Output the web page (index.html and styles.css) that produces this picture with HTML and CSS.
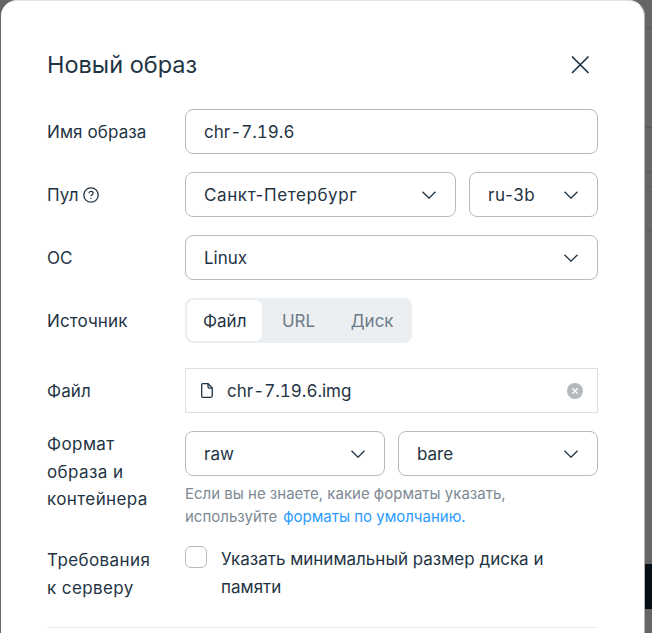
FILE: index.html
```html
<!DOCTYPE html>
<html lang="ru">
<head>
    <meta charset="UTF-8">
    <meta name="viewport" content="width=device-width, initial-scale=1.0">
    <title>Новый образ</title>
    <link rel="stylesheet" href="styles.css">
</head>
<body>

<div class="modal">
    <div class="modal-header">
        <h2>Новый образ</h2>
        <svg class="close" width="24" height="24" viewBox="0 0 24 24"><path d="M4 3.5 20.5 20M20.5 3.5 4 20"/></svg>
    </div>

    <form class="image-form">
        <div class="form-row">
            <label class="form-label">Имя образа</label>
            <div class="field wide-text">chr-7.19.6</div>
        </div>

        <div class="form-row">
            <label class="form-label">Пул
                <svg class="help" width="16" height="16" viewBox="0 0 16 16"><circle cx="8" cy="8" r="7.2"/><path d="M5.9 6.3C6 5 6.9 4.4 8 4.4c1.2 0 2.1.8 2.1 1.8 0 1.5-2.1 1.5-2.1 3.1"/><path d="M8 11v.9"/></svg>
            </label>
            <div class="field-group">
                <div class="field select grow city">Санкт-Петербург
                    <svg class="chevron" width="14" height="8" viewBox="0 0 14 8"><path d="M.5.7 7 7.2 13.5.7"/></svg>
                </div>
                <div class="field select zone city">ru-3b
                    <svg class="chevron" width="14" height="8" viewBox="0 0 14 8"><path d="M.5.7 7 7.2 13.5.7"/></svg>
                </div>
            </div>
        </div>

        <div class="form-row">
            <label class="form-label">ОС</label>
            <div class="field select">Linux
                <svg class="chevron" width="14" height="8" viewBox="0 0 14 8"><path d="M.5.7 7 7.2 13.5.7"/></svg>
            </div>
        </div>

        <div class="form-row">
            <label class="form-label">Источник</label>
            <div class="tabs">
                <span class="tab active">Файл</span>
                <span class="tab">URL</span>
                <span class="tab">Диск</span>
            </div>
        </div>

        <div class="form-row file-row">
            <label class="form-label">Файл</label>
            <div class="field file">
                <svg class="file-icon" width="12" height="15" viewBox="0 0 12 15"><path d="M1.5.7h5.6l4.2 4.4v7.7a1.5 1.5 0 0 1-1.5 1.5H1.5A1 1 0 0 1 .7 13.3V1.5a1 1 0 0 1 .8-.8z"/><path d="M7 .7v3a1.4 1.4 0 0 0 1.4 1.4h2.9"/></svg>
                <span class="file-name wide-text">chr-7.19.6.img</span>
                <svg class="clear" width="16" height="16" viewBox="0 0 16 16"><circle cx="8" cy="8" r="8"/><path d="M5.3 5.3l5.4 5.4M10.7 5.3l-5.4 5.4"/></svg>
            </div>
        </div>

        <div class="form-row">
            <label class="form-label multi">Формат образа и контейнера</label>
            <div>
                <div class="field-group half">
                    <div class="field select">raw
                        <svg class="chevron" width="14" height="8" viewBox="0 0 14 8"><path d="M.5.7 7 7.2 13.5.7"/></svg>
                    </div>
                    <div class="field select">bare
                        <svg class="chevron" width="14" height="8" viewBox="0 0 14 8"><path d="M.5.7 7 7.2 13.5.7"/></svg>
                    </div>
                </div>
                <div class="hint">
                    <span>Если вы не знаете, какие форматы указать,</span>
                    <div class="hint-line">
                        <span>используйте</span>
                        <a href="#">форматы по умолчанию.</a>
                    </div>
                </div>
            </div>
        </div>

        <div class="form-row requirements">
            <label class="form-label multi">Требования к серверу</label>
            <div class="check">
                <span class="checkbox"></span>
                <span class="check-text">Указать минимальный размер диска и памяти</span>
            </div>
        </div>
    </form>

    <hr class="divider">
</div>

</body>
</html>
```

FILE: styles.css
```css
html, body {
    height: 100%;
}
body {
    margin: 0;
    overflow: hidden;
    font-family: Inter, "Noto Sans", sans-serif;
    color: #1f3444;
    background-color: #666;
    background-image:
        linear-gradient(#060f16, #060f16),
        linear-gradient(#5a5a5a, #5a5a5a),
        linear-gradient(#5a5a5a, #5a5a5a),
        linear-gradient(#5a5a5a, #5a5a5a),
        linear-gradient(#5a5a5a, #5a5a5a),
        linear-gradient(#5a5a5a, #5a5a5a);
    background-repeat: no-repeat;
    background-size: 8px 45px, 100% 1px, 100% 1px, 100% 1px, 100% 1px, 100% 1px;
    background-position: right 0 top 564px, 0 27px, 0 127px, 0 171px, 0 186px, 0 230px;
}
.modal {
    box-sizing: border-box;
    width: 644px;
    height: 633px;
    margin-left: 1px;
    padding: 0 46px;
    background-color: #fff;
    border-top: 1px solid #dfe3e6;
    border-right: 1px solid #b3b3b3;
    border-radius: 16px 16px 0 0;
    overflow: hidden;
}
.modal-header {
    display: flex;
    justify-content: space-between;
    align-items: center;
    height: 45px;
    margin-top: 41px;
    margin-bottom: 22px;
}
.modal-header h2 {
    margin: 0;
    font-size: 23.5px;
    font-weight: 400;
    line-height: 45px;
}
.close {
    margin-right: 6px;
    fill: none;
    stroke: #1f3444;
    stroke-width: 1.7;
}
.image-form {
    display: flex;
    flex-direction: column;
    gap: 18px;
}
.form-row {
    display: flex;
    font-size: 17px;
}
.file-row {
    margin-top: 7px;
}
.form-label {
    display: flex;
    flex: 0 0 138px;
    align-items: center;
    gap: 4px;
    height: 45px;
    letter-spacing: .1px;
}
.form-label.multi {
    display: block;
    box-sizing: border-box;
    height: auto;
    padding-right: 34px;
    line-height: 27.5px;
    letter-spacing: .4px;
}
.field {
    display: flex;
    align-items: center;
    flex: 1;
    box-sizing: border-box;
    height: 45px;
    padding: 0 18px;
    border: 1px solid #b4bbc2;
    border-radius: 8px;
}
.wide-text {
    font-variant-numeric: tabular-nums;
}
.city {
    letter-spacing: .6px;
}
.field-group {
    display: flex;
    flex: 1;
    gap: 13px;
}
.field-group .grow {
    flex: 1;
}
.field-group .zone {
    flex: 0 0 129px;
}
.select {
    justify-content: space-between;
    padding-right: 19px;
}
.chevron {
    fill: none;
    stroke: #1f3444;
    stroke-width: 1.3;
}
.help {
    fill: none;
    stroke: #1f3444;
    stroke-width: 1.3;
}
.tabs {
    display: flex;
    gap: 3.5px;
    box-sizing: border-box;
    height: 45px;
    padding: 2px;
    background-color: #ebeff2;
    border-radius: 8px;
}
.tab {
    display: flex;
    align-items: center;
    padding: 0 16px;
    color: #6d7c88;
    border-radius: 7px;
}
.tab.active {
    color: #1f3444;
    background-color: #fff;
}
.field.file {
    justify-content: flex-start;
    padding: 0 14px 0 15px;
    border-color: #dde1e5;
    border-radius: 0;
}
.file-icon {
    fill: none;
    stroke: #1f3444;
    stroke-width: 1.3;
}
.file-name {
    flex: 1;
    margin-left: 14px;
}
.clear {
    fill: #b3b8bd;
    stroke: #fff;
    stroke-width: 1.3;
}
.clear circle {
    stroke: none;
}
.half {
    width: 413px;
}
.half .field {
    flex: 0 0 200px;
}
.hint {
    margin-top: 6px;
    font-size: 15px;
    line-height: 23px;
    color: #7d8993;
}
.hint-line {
    display: flex;
    gap: 6px;
}
.hint a {
    color: #2b9aff;
    text-decoration: none;
}
.requirements {
    margin-top: -1px;
}
.requirements .form-label {
    padding-top: 2px;
}
.check {
    display: flex;
    gap: 14px;
}
.checkbox {
    flex: 0 0 22px;
    box-sizing: border-box;
    height: 22px;
    margin-top: 1px;
    border: 1px solid #b4bbc2;
    border-radius: 6px;
}
.check-text {
    width: 340px;
    line-height: 28px;
}
.divider {
    height: 1px;
    margin: 25px 0 0;
    border: 0;
    background-color: #e9ecee;
}
```
